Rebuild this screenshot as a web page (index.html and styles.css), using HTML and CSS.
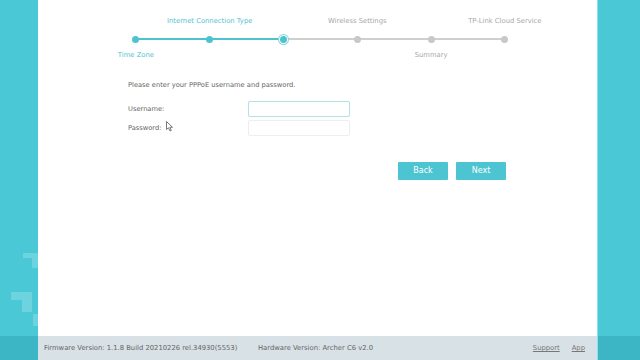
FILE: index.html
```html
<!DOCTYPE html>
<html>
<head>
<meta charset="utf-8">
<link rel="stylesheet" href="styles.css">
</head>
<body>
<div class="page">
  <div class="band band-left">
    <div class="band-top">
      <div class="deco deco-a"></div>
      <div class="deco deco-b"></div>
      <div class="deco deco-c"></div>
    </div>
    <div class="band-foot"></div>
  </div>
  <div class="panel">
    <div class="content">
      <div class="stepper">
        <div class="step done first"><div class="lab-top"></div><div class="track"><span class="dot"></span></div><div class="lab-bot">Time Zone</div></div>
        <div class="step done"><div class="lab-top">Internet Connection Type</div><div class="track"><span class="dot"></span></div><div class="lab-bot"></div></div>
        <div class="step current"><div class="lab-top"></div><div class="track"><span class="dot"></span></div><div class="lab-bot"></div></div>
        <div class="step"><div class="lab-top">Wireless Settings</div><div class="track"><span class="dot"></span></div><div class="lab-bot"></div></div>
        <div class="step"><div class="lab-top"></div><div class="track"><span class="dot"></span></div><div class="lab-bot">Summary</div></div>
        <div class="step last"><div class="lab-top">TP-Link Cloud Service</div><div class="track"><span class="dot"></span></div><div class="lab-bot"></div></div>
      </div>
      <div class="form">
        <p class="intro">Please enter your PPPoE username and password.</p>
        <div class="row"><span class="label">Username:</span><span class="input focus"></span></div>
        <div class="row"><span class="label">Password: <svg class="cursor" width="8" height="11" viewBox="0 0 8 11"><path d="M0.5 0.5 L0.5 8.5 L2.5 6.8 L4 10 L5.3 9.4 L3.9 6.3 L6.5 6.3 Z" fill="#fff" stroke="#555" stroke-width="0.8"/></svg></span><span class="input"></span></div>
        <div class="buttons"><span class="btn">Back</span><span class="btn">Next</span></div>
      </div>
    </div>
    <div class="footer">
      <span class="fw">Firmware Version: 1.1.8 Build 20210226 rel.34930(5553)</span>
      <span class="hw">Hardware Version: Archer C6 v2.0</span>
      <span class="links"><a>Support</a><a>App</a></span>
    </div>
  </div>
  <div class="band band-right">
    <div class="band-top"></div>
    <div class="band-foot"></div>
  </div>
</div>
</body>
</html>
```

FILE: styles.css
```css
html, body { margin: 0; padding: 0; }
body { font-family: "DejaVu Sans", Verdana, sans-serif; width: 640px; height: 360px; overflow: hidden; }
.page { display: flex; width: 640px; height: 360px; }
.band { display: flex; flex-direction: column; }
.band-left { width: 38px; }
.band-right { width: 43px; border-left: 1px solid #8fe0e8; box-sizing: border-box; }
.band-top { flex: 1; background: #4ac8d5; position: relative; }
.band-foot { height: 24px; background: #3cb6c4; }
.deco { position: absolute; background: #6dd3de; }
.deco-a { left: 23px; top: 253px; width: 15px; height: 5px; }
.deco-a::after { content: ""; position: absolute; left: 9px; top: 5px; width: 6px; height: 10px; background: #6dd3de; }
.deco-b { left: 11px; top: 292px; width: 21px; height: 8px; }
.deco-b::after { content: ""; position: absolute; left: 11px; top: 8px; width: 10px; height: 12px; background: #6dd3de; }
.deco-c { left: 33px; top: 314px; width: 5px; height: 12px; }
.panel { width: 559px; display: flex; flex-direction: column; background: #fff; }
.content { flex: 1; }
.stepper { display: flex; padding: 16px 0 0 61px; }
.step { width: 73.8px; display: flex; flex-direction: column; align-items: center; font-size: 6.8px; color: #a8a8a8; }
.step.done, .step.current { color: #52c2ce; }
.lab-top, .lab-bot { height: 10px; line-height: 10px; white-space: nowrap; }
.lab-top { margin-bottom: 8px; }
.lab-bot { margin-top: 6px; }
.track { position: relative; width: 100%; height: 10px; display: flex; justify-content: center; align-items: center; }
.track::before, .track::after { content: ""; position: absolute; top: 4px; height: 2px; width: 50%; background: #cfcfcf; }
.track::before { left: 0; }
.track::after { right: 0; }
.done .track::before, .done .track::after, .current .track::before { background: #4cc3cf; }
.first .track::before, .last .track::after { display: none; }
.dot { position: relative; z-index: 1; width: 7px; height: 7px; border-radius: 50%; background: #c8c8c8; }
.done .dot { background: #4cc3cf; }
.current .dot { background: #4cc3cf; box-shadow: 0 0 0 1px #fff, 0 0 0 2px #8ad8e0; }
.form { padding-left: 90px; }
.intro { margin: 21px 0 12px; font-size: 6.7px; color: #666; }
.row { display: flex; align-items: center; height: 16px; margin-bottom: 3px; }
.row + .row { margin-top: 1px; }
.label { width: 120px; font-size: 6.7px; color: #666; position: relative; }
.cursor { position: absolute; left: 38px; top: -3px; }
.input { width: 102px; height: 16px; box-sizing: border-box; border: 1px solid #eeeeee; border-radius: 2px; background: #fff; }
.input.focus { border-color: #b5e1e6; box-shadow: 0 0 1px #d5eef0; }
.buttons { display: flex; gap: 8px; margin: 26px 0 0 270px; }
.btn { width: 50px; height: 18px; line-height: 18px; text-align: center; background: #4cc4d1; color: #fff; font-size: 8px; border-radius: 1px; }
.footer { height: 24px; background: #d8e1e5; display: flex; align-items: center; font-size: 6.8px; color: #666; padding: 0 12px 0 6px; }
.fw { width: 214px; }
.hw { flex: 1; }
.links a { text-decoration: underline; color: #777; margin-left: 12px; }
```
